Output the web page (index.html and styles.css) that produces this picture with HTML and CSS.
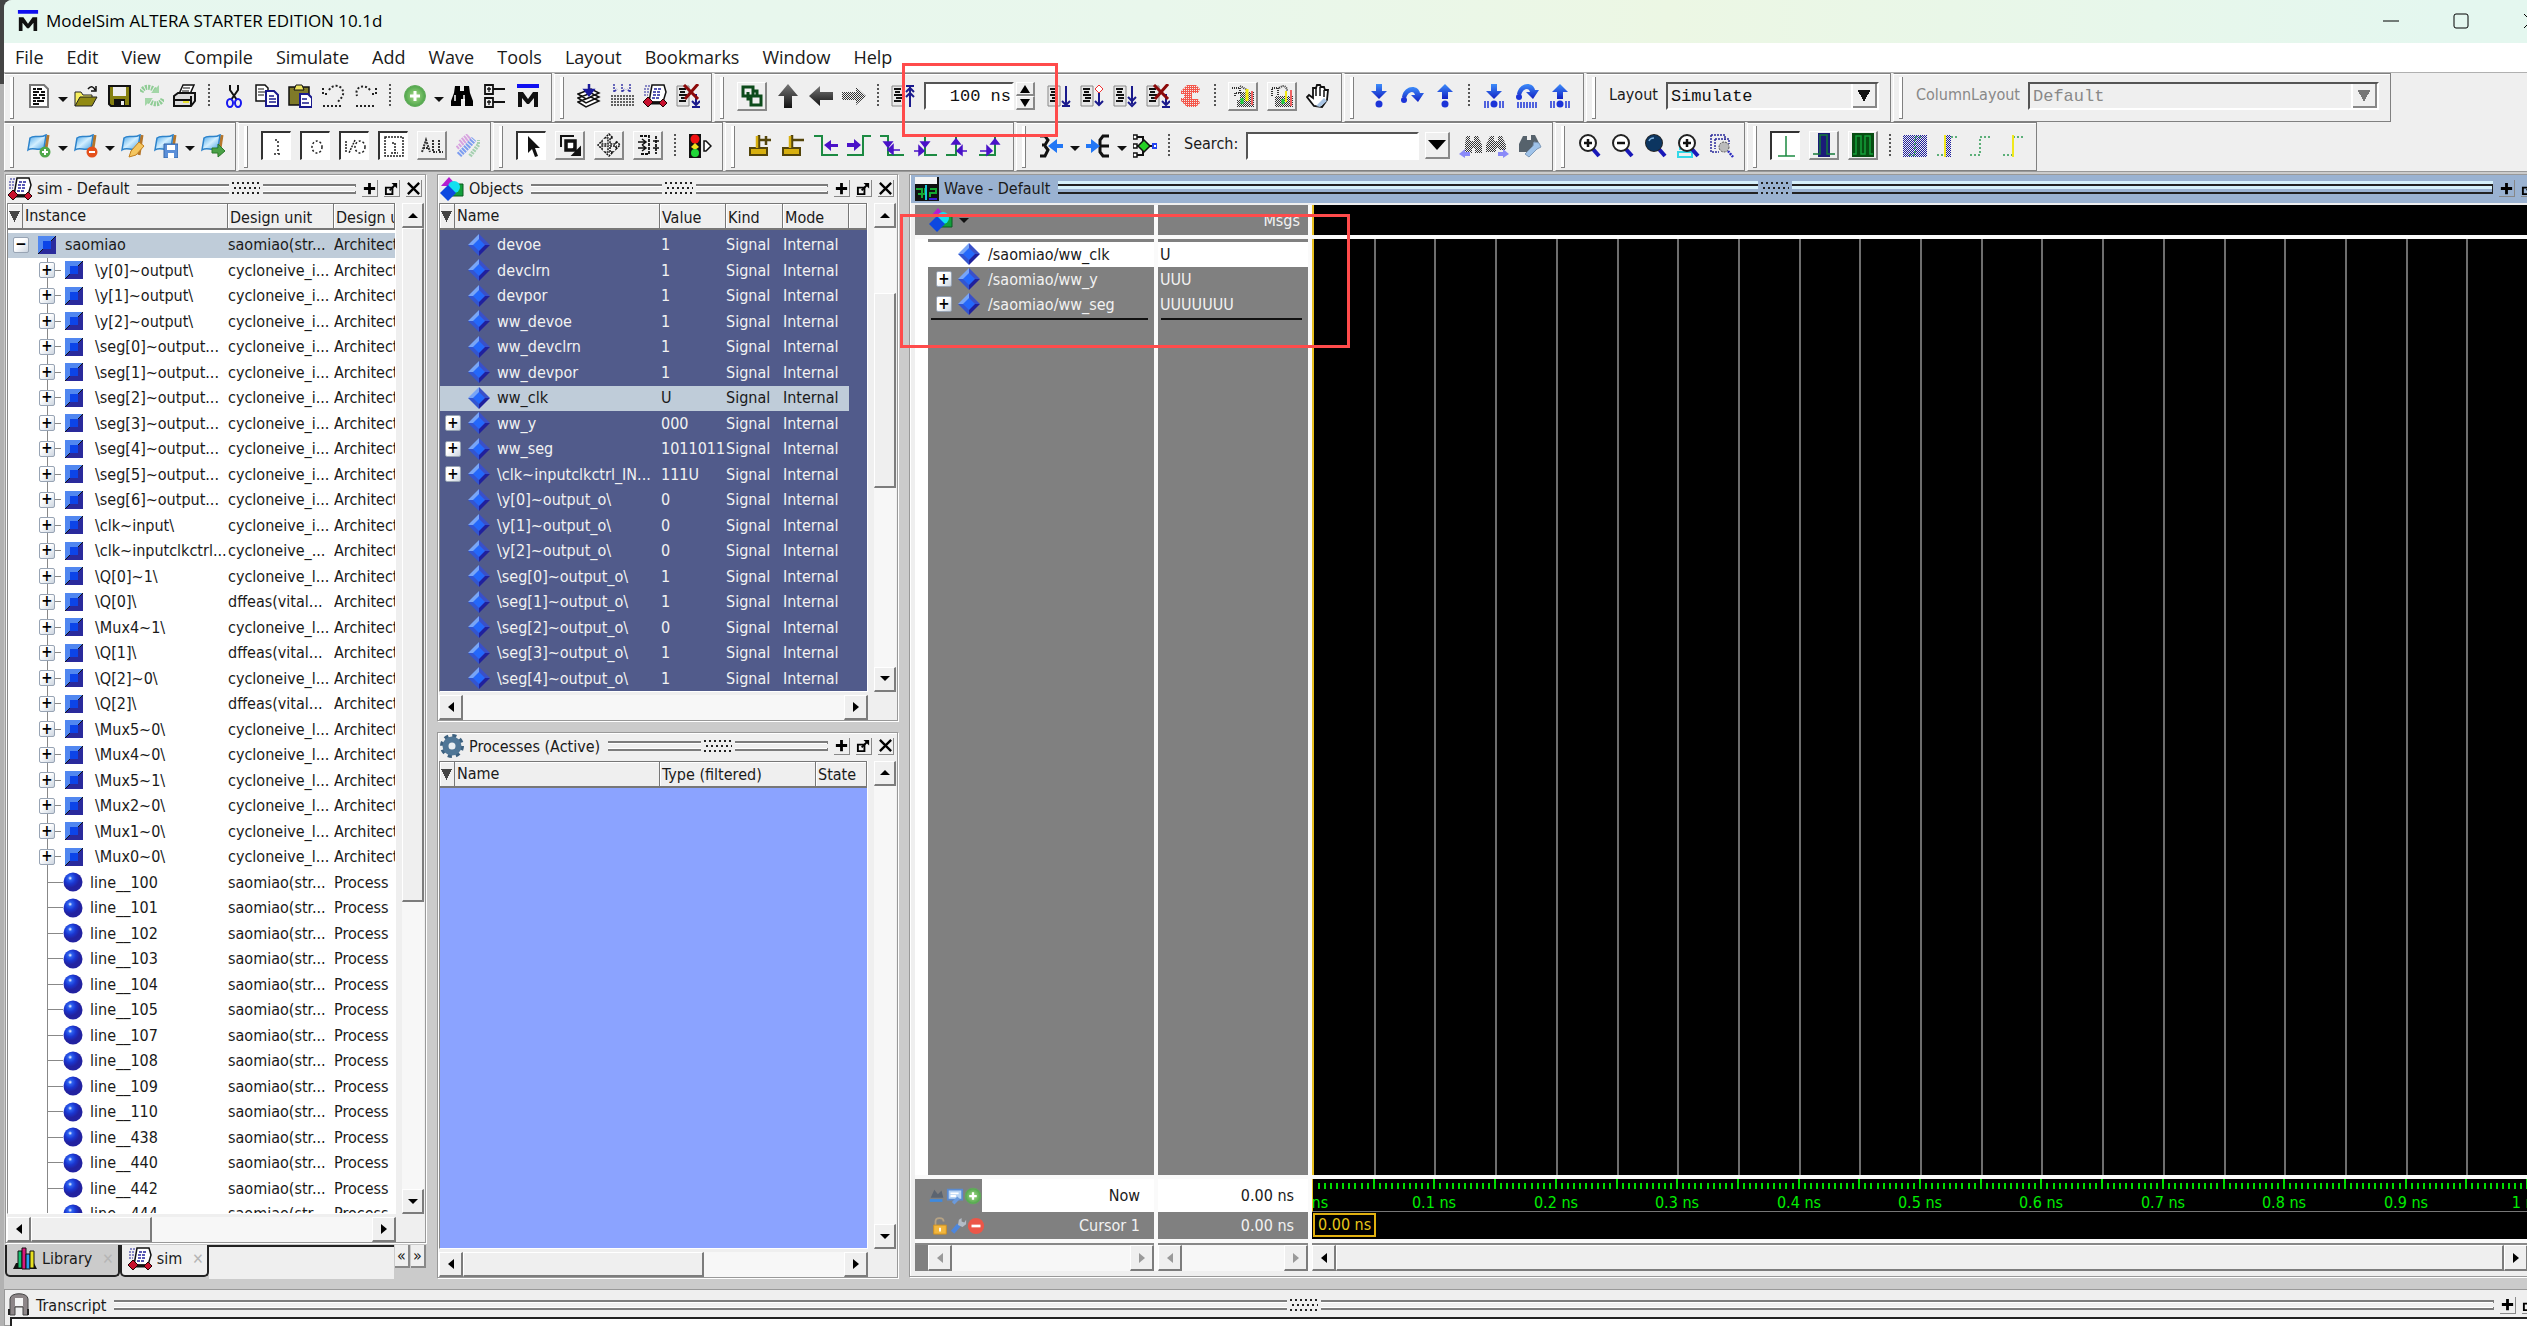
FILE: index.html
```html
<!DOCTYPE html>
<html lang="en">
<head>
  <meta charset="UTF-8" />
  <meta name="viewport" content="width=device-width, initial-scale=1" />
  <title>ModelSim ALTERA STARTER EDITION 10.1d</title>
  <link rel="stylesheet" href="styles.css">
</head>
<body>

<svg class="sprite" aria-hidden="true">
  <defs>
    <pattern id="dither" width="2" height="2" patternUnits="userSpaceOnUse"><path d="M0 0h1v1H0zM1 1h1v1H1z" fill="#333"/></pattern>
    <pattern id="ditherRed" width="2" height="2" patternUnits="userSpaceOnUse"><path d="M0 0h1v2H0zM1 1h1v1H1z" fill="#f4574b"/></pattern>
    <pattern id="ditherBlue" width="2" height="2" patternUnits="userSpaceOnUse"><path d="M0 0h1v1H0zM1 1h1v1H1z" fill="#1c1c9c"/></pattern>
    <linearGradient id="gDark" x2="0" y2="1"><stop stop-color="#777"/><stop offset="1" stop-color="#111"/></linearGradient>
    <linearGradient id="gBlue" x2="0" y2="1"><stop stop-color="#3d8dfa"/><stop offset="1" stop-color="#1221c4"/></linearGradient>
    <linearGradient id="gFlag" x2="1" y2="1"><stop stop-color="#3f9fe6"/><stop offset=".5" stop-color="#d3efff"/><stop offset="1" stop-color="#3d9be4"/></linearGradient>
    <radialGradient id="gBall" cx=".35" cy=".3"><stop stop-color="#fff"/><stop offset=".22" stop-color="#2d62f0"/><stop offset=".6" stop-color="#1a35cf"/><stop offset="1" stop-color="#2222a0"/></radialGradient>
    <radialGradient id="gGreen"><stop stop-color="#a9dc8a"/><stop offset="1" stop-color="#4ea54a"/></radialGradient>
  </defs>

  <!-- shared pieces -->
  <symbol id="p-doc" viewBox="0 0 24 24"><path d="M3 1h14l4 4v18H3z" fill="#fff" stroke="#777" stroke-width="2"/><path d="M6 5h3M10 5h5M6 8h6M14 8h4M6 11h4M12 11h6M6 14h7M15 14h3M6 17h3M10 17h7M6 20h6" stroke="#111" stroke-width="2"/></symbol>
  <symbol id="p-page" viewBox="0 0 24 24"><path d="M1 2h12v20H1z" fill="#e8e8e8" stroke="#888"/><path d="M3 5h7M4 8h5M3 11h8M5 14h6M3 17h7" stroke="#111" stroke-width="2"/></symbol>
  <symbol id="p-flag" viewBox="0 0 24 24"><path d="M21 1l-3 20" stroke="#b5762b" stroke-width="3"/><path d="M3 4c5-4 9 1 16-3l-2 13c-7 4-10-2-16 2z" fill="url(#gFlag)" stroke="#2d83cb" stroke-width="1.500"/></symbol>
  <symbol id="p-bino" viewBox="0 0 24 24"><path d="M5 2h5v5h4V2h5l1 7 3 8v5h-8v-7h-4v7H1v-5l3-8z"/></symbol>
  <symbol id="p-lens" viewBox="0 0 24 24"><path d="M14 14l7 8" stroke="#1818b8" stroke-width="4"/><circle cx="10" cy="9" r="8" fill="#fff" stroke="#222" stroke-width="2"/></symbol>

  <!-- file / edit -->
  <symbol id="i-m" viewBox="0 0 24 24"><path d="M1 0h22v4H1z" fill="#1010f0"/><path d="M2 23V8h5l5 7 5-7h5v15h-4V14l-5 6h-2l-5-6v9z" fill="#111"/></symbol>
  <symbol id="i-new" viewBox="0 0 24 24"><use href="#p-doc"/></symbol>
  <symbol id="i-open" viewBox="0 0 24 24"><path d="M14 5c3-4 6-2 7 1m1-4v5h-5" fill="none" stroke="#111" stroke-width="1.500"/><path d="M1 22V8h6l2 3h9v3" fill="#f8f060" stroke="#222"/><path d="M1 22l5-9h17l-5 9z" fill="#918a13" stroke="#222"/></symbol>
  <symbol id="i-save" viewBox="0 0 24 24"><path d="M2 2h21v20H4l-2-2z" fill="#858010" stroke="#111" stroke-width="2"/><path d="M6 3h13v9H6z" fill="#eee"/><path d="M7 15h11v7H7z" fill="#111"/><path d="M14 17h3v4h-3z" fill="#eee"/></symbol>
  <symbol id="i-refresh" viewBox="0 0 24 24"><g fill="none" stroke="#8fcc95" stroke-width="5" stroke-dasharray="2 1"><path d="M1 8c3-6 9-6 14-2"/><path d="M23 15c-3 6-9 6-14 2"/></g><path d="M11 9h8V1zM13 14H5v8z" fill="#a3d6a7"/></symbol>
  <symbol id="i-print" viewBox="0 0 24 24"><path d="M6 10l4-9h11l-4 9z" fill="#fff" stroke="#111" stroke-width="1.500"/><path d="M10 4h7M9 7h7" stroke="#111"/><path d="M1 12l4-3h17v8l-4 5H1z" fill="#ddd" stroke="#111" stroke-width="2"/><path d="M2 16h15M18 12v9" stroke="#111" stroke-width="2"/><path d="M10 17h6v2h-6z" fill="#e8e030"/></symbol>
  <symbol id="i-cut" viewBox="0 0 24 24"><path d="M8 1v5l7 10M16 1v5L9 16" fill="none" stroke="#111" stroke-width="2"/><g fill="none" stroke="#1818f0" stroke-width="2"><ellipse cx="8" cy="19" rx="3" ry="4"/><ellipse cx="16" cy="19" rx="3" ry="4"/></g></symbol>
  <symbol id="i-copy" viewBox="0 0 24 24"><path d="M1 1h9l3 3v13H1z" fill="#fff" stroke="#111" stroke-width="1.500"/><path d="M3 5h6M3 8h8M3 11h6" stroke="#111"/><path d="M11 7h8l4 4v11H11z" fill="#fff" stroke="#1a1a8c" stroke-width="2"/><path d="M14 12h5M14 15h7M14 18h7" stroke="#1a1a8c" stroke-width="1.500"/></symbol>
  <symbol id="i-paste" viewBox="0 0 24 24"><path d="M1 3h20v18H1z" fill="#7f7a28" stroke="#111" stroke-width="1.500"/><path d="M6 6l2-5h6l2 5z" fill="#eee460" stroke="#111"/><path d="M12 10h8l4 4v9H12z" fill="#fff" stroke="#1a1a8c" stroke-width="2"/><path d="M14 15h5M14 19h7" stroke="#1a1a8c" stroke-width="1.500"/></symbol>
  <symbol id="i-undo" viewBox="0 0 24 24"><g fill="none" stroke="#222" stroke-width="2" stroke-dasharray="2 2"><path d="M2 4v6h6M8 6c6-9 18-2 13 7l-5 6M2 22h20"/></g></symbol>
  <symbol id="i-redo" viewBox="0 0 24 24"><g fill="none" stroke="#222" stroke-width="2" stroke-dasharray="2 2"><path d="M22 4v6h-6M16 6C10-1 0 3 3 12M2 22h20"/></g></symbol>
  <symbol id="i-add" viewBox="0 0 24 24"><circle cx="12" cy="12" r="10.500" fill="url(#gGreen)" stroke="#63ad5c"/><path d="M12 7v10M7 12h10" stroke="#fff" stroke-width="3"/></symbol>
  <symbol id="i-find" viewBox="0 0 24 24"><use href="#p-bino"/><path d="M5 11v6M14 11v6" stroke="#fff" stroke-width="1.500"/></symbol>
  <symbol id="i-tree" viewBox="0 0 24 24"><path d="M2 1h8v9H2zM2 14h8v9H2zM10 5h12M10 18h12" fill="none" stroke="#111" stroke-width="1.800"/><path d="M4 5h4M6 3v5M4 18h4M6 16v5" stroke="#111" stroke-width="1.300"/></symbol>

  <!-- compile / simulate -->
  <symbol id="i-compile" viewBox="0 0 24 24"><g fill="#fff" stroke="#111" stroke-width="1.500"><path d="M1 18l8 5 13-6-8-4zM1 14l8 5 13-6-8-4zM1 10l8 5 13-6-8-4z"/></g><path d="M12 0v10M8 6l4 5 4-5z" stroke="#1a1a9c" stroke-width="2.500" fill="#1a1a9c"/></symbol>
  <symbol id="i-compileall" viewBox="0 0 24 24"><path d="M4 0v8l3-3M12 0v8l3-3M20 0v8l-3-3" fill="none" stroke="#3a3aa8" stroke-width="1.500" stroke-dasharray="2 1"/><path d="M1 12h23M1 15h23M1 18h23M1 21h23" stroke="#333" stroke-width="1.500" stroke-dasharray="2 1"/></symbol>
  <symbol id="i-sim" viewBox="0 0 24 24"><path d="M2 2h5M1 5h5M1 8h5M1 11h4" stroke="#22229a" stroke-dasharray="2 1"/><path d="M9 1h12l2 7-3 10H6z" fill="#fff" stroke="#111" stroke-width="1.500"/><path d="M11 5h8M10 8h8M10 11h7M9 14h7" stroke="#22229a" stroke-width="1.300" stroke-dasharray="3 1"/><path d="M6 19h14" stroke="#111" stroke-width="3"/><path d="M5 13l5 5-5 5-5-5zM20 15l4 4-4 4-4-4z" fill="#c8102e" stroke="#200"/></symbol>
  <symbol id="i-break" viewBox="0 0 24 24"><use href="#p-page"/><path d="M20 10v11M16 17l4 4 4-4M16 23h8" fill="none" stroke="#1a1a8c" stroke-width="2"/><path d="M8 1l14 14M22 0L9 15" stroke="#8c0a0a" stroke-width="3"/></symbol>

  <!-- run -->
  <symbol id="i-link" viewBox="0 0 24 24"><path d="M3 3h10v9H3zM11 12h10v9H11z" fill="none" stroke="#0c4b1b" stroke-width="3"/><path d="M8 8v7h4M17 11V7h-3" fill="none" stroke="#0c4b1b" stroke-width="3"/></symbol>
  <symbol id="i-up" viewBox="0 0 24 24"><path d="M12 0l10 12h-6v12H8V12H2z" fill="url(#gDark)"/></symbol>
  <symbol id="i-back" viewBox="0 0 24 24"><path d="M0 12L11 2v6h13v8H11v6z" fill="url(#gDark)"/></symbol>
  <symbol id="i-fwd" viewBox="0 0 24 24"><path d="M24 12L14 3v5H0v8h14v5z" fill="url(#dither)"/></symbol>
  <symbol id="i-restart" viewBox="0 0 24 24"><use href="#p-page"/><path d="M19 23V3M15 2h8M15 8l4-4 4 4M15 13l4-4 4 4" fill="none" stroke="#1a1a8c" stroke-width="2"/></symbol>
  <symbol id="i-run" viewBox="0 0 24 24"><use href="#p-page"/><path d="M19 2v18M15 17l4 4 4-4M15 22h8" fill="none" stroke="#1a1a8c" stroke-width="2"/></symbol>
  <symbol id="i-continue" viewBox="0 0 24 24"><use href="#p-page"/><path d="M19 8v13M15 17l4 4 4-4" fill="none" stroke="#1a1a8c" stroke-width="2"/><path d="M19 1l4 4-4 4-4-4z" fill="#fff" stroke="#e33"/></symbol>
  <symbol id="i-runall" viewBox="0 0 24 24"><use href="#p-page"/><path d="M19 2v18M15 13l4 4 4-4M15 18l4 4 4-4" fill="none" stroke="#1a1a8c" stroke-width="2"/></symbol>
  <symbol id="i-stop" viewBox="0 0 24 24"><path d="M8 1h9l4 4-2 4h-6v6h6l2 4-4 4H8l-6-6v-3h3v-4H2V7z" fill="url(#ditherRed)"/></symbol>
  <symbol id="i-perf" viewBox="0 0 24 24"><path d="M1 4h8v5H4v3M9 2l7 4" fill="none" stroke="#333" stroke-width="2" stroke-dasharray="1 1"/><path d="M9 8h14v15H6v-7h3z" fill="url(#dither)"/><path d="M16 5v12" stroke="#f0ea10" stroke-width="3"/><path d="M21 7v14" stroke="#f06464" stroke-width="2"/><path d="M11 14v6" stroke="#20d040" stroke-width="3"/></symbol>
  <symbol id="i-mem" viewBox="0 0 24 24"><path d="M2 12V4h6v8M9 4c5-4 8-1 8 3" fill="none" stroke="#333" stroke-width="2" stroke-dasharray="1 1"/><path d="M5 12h18v11H5z" fill="url(#dither)"/><path d="M16 7v11" stroke="#f0ea10" stroke-width="2"/><path d="M21 6v16" stroke="#f06464" stroke-width="2"/><path d="M13 15v5" stroke="#20d040" stroke-width="3"/></symbol>
  <symbol id="i-hand" viewBox="0 0 24 24"><path d="M8 22L1 13l2-2 4 3V4h3l1-3h3l1 2h3l1 3h3l-1 10-5 7z" fill="#fff" stroke="#111" stroke-width="1.800"/><path d="M10 4v8M14 3v9M18 6v7" stroke="#111" stroke-width="1.500"/><path d="M10 22l8-8 3 3-7 6z" fill="#a8c4e4"/></symbol>

  <!-- step -->
  <symbol id="i-stepin" viewBox="0 0 24 24"><path d="M9 0h6v7h5l-8 8-8-8h5z" fill="url(#gBlue)"/><circle cx="12" cy="20" r="3.500" fill="#1c34d8"/></symbol>
  <symbol id="i-stepover" viewBox="0 0 24 24"><path d="M2 13C4 1 18 0 20 9h4l-6 9-7-7h4c-1-5-7-4-9 3z" fill="url(#gBlue)"/><circle cx="4" cy="16" r="3" fill="#1c34d8"/></symbol>
  <symbol id="i-stepout" viewBox="0 0 24 24"><path d="M9 15h6V8h5l-8-8-8 8h5z" fill="url(#gBlue)"/><circle cx="12" cy="20" r="3.500" fill="#1c34d8"/></symbol>
  <symbol id="i-stepinc" viewBox="0 0 24 24"><use href="#i-stepin"/><path d="M3 17v7M6 17v7M18 17v7M21 17v7" stroke="#1c34d8" stroke-width="1.500"/></symbol>
  <symbol id="i-stepoverc" viewBox="0 0 24 24"><use href="#i-stepover" y="-3"/><path d="M3 18v6M6 18v6M9 18v6M12 18v6M15 18v6M18 18v6M21 18v6" stroke="#1c34d8" stroke-width="1.500"/></symbol>
  <symbol id="i-stepoutc" viewBox="0 0 24 24"><use href="#i-stepout"/><path d="M3 17v7M6 17v7M18 17v7M21 17v7" stroke="#1c34d8" stroke-width="1.500"/></symbol>

  <!-- bookmarks -->
  <symbol id="i-flagadd" viewBox="0 0 24 24"><use href="#p-flag"/><circle cx="18" cy="18" r="5.500" fill="#4fa84b"/><path d="M18 15v6M15 18h6" stroke="#fff" stroke-width="2"/></symbol>
  <symbol id="i-flagdel" viewBox="0 0 24 24"><use href="#p-flag"/><circle cx="18" cy="18" r="5.500" fill="#e4501c"/><path d="M15 18h6" stroke="#fff" stroke-width="2"/></symbol>
  <symbol id="i-flagedit" viewBox="0 0 24 24"><use href="#p-flag"/><path d="M8 23l2-6 8-9 5 4-8 9z" fill="#f4c660" stroke="#c17e1d"/></symbol>
  <symbol id="i-flagsave" viewBox="0 0 24 24"><use href="#p-flag"/><path d="M10 10h14v14H10z" fill="#5b8fd8" stroke="#3566a8"/><path d="M13 11h8v5h-8zM14 19h6v5h-6z" fill="#fff"/></symbol>
  <symbol id="i-flaggo" viewBox="0 0 24 24"><use href="#p-flag"/><path d="M11 14h6v-4l7 7-7 6v-4h-6z" fill="#4aa146" stroke="#2b7a2a"/></symbol>

  <!-- filters -->
  <symbol id="i-fin" viewBox="0 0 24 24"><path d="M10 6h3v14M9 20h7" fill="none" stroke="#222" stroke-width="1.500" stroke-dasharray="2 2"/></symbol>
  <symbol id="i-fout" viewBox="0 0 24 24"><ellipse cx="13" cy="13" rx="5" ry="6" fill="none" stroke="#222" stroke-width="1.500" stroke-dasharray="2 2"/></symbol>
  <symbol id="i-fio" viewBox="0 0 24 24"><path d="M3 7v12M12 6L6 19" stroke="#222" stroke-width="1.500" stroke-dasharray="2 1"/><ellipse cx="17" cy="13" rx="5" ry="6" fill="none" stroke="#222" stroke-width="1.500" stroke-dasharray="2 2"/></symbol>
  <symbol id="i-fint" viewBox="0 0 24 24"><path d="M3 3h18v19H3zM10 9h3v10M9 19h7" fill="none" stroke="#222" stroke-width="1.500" stroke-dasharray="2 1"/></symbol>
  <symbol id="i-fall" viewBox="0 0 24 24"><path d="M2 19l4-12 4 12M3 15h6M13 7v12h4M19 7v12h4" fill="none" stroke="#333" stroke-width="2" stroke-dasharray="2 1"/></symbol>
  <symbol id="i-fcfg" viewBox="0 0 24 24"><path d="M1 14L14 3M4 8l8-7" stroke="#d7a3e0" stroke-width="4" stroke-dasharray="2 1"/><path d="M14 22l9-12V6" fill="none" stroke="#a5d0b0" stroke-width="4" stroke-dasharray="2 1"/><path d="M3 21l9-9 6-7" fill="none" stroke="#7d9df0" stroke-width="6" stroke-dasharray="2 1"/></symbol>

  <!-- mouse modes -->
  <symbol id="i-arrow" viewBox="0 0 24 24"><path d="M8 2v17l4-4 3 8 3-1-3-8h5z" fill="#111"/></symbol>
  <symbol id="i-zoommode" viewBox="0 0 24 24"><path d="M3 14V3h13" fill="none" stroke="#111" stroke-width="2"/><path d="M8 8h9v9H8z" fill="#fff" stroke="#111" stroke-width="3.500"/><path d="M15 15l6 6M22 15v7h-7z" stroke="#111" stroke-width="2" fill="#111"/></symbol>
  <symbol id="i-pan" viewBox="0 0 24 24"><path d="M12 1l4 4h-3v6h6V8l4 4-4 4v-3h-6v6h3l-4 4-4-4h3v-6H5v3l-4-4 4-4v3h6V5H8z" fill="#fff" stroke="#111" stroke-width="1.500" stroke-dasharray="2 1"/></symbol>
  <symbol id="i-editmode" viewBox="0 0 24 24"><path d="M4 3h9v18H4M20 3v18" fill="none" stroke="#111" stroke-width="1.800" stroke-dasharray="3 1"/><path d="M2 9h8M2 15h8M6 6l4 3-4 3M6 12l4 3-4 3M17 8h6M17 15h6" fill="none" stroke="#111" stroke-width="1.500"/></symbol>
  <symbol id="i-traffic" viewBox="0 0 24 24"><path d="M1 0h12v24H1z" fill="#111"/><circle cx="7" cy="5" r="4.500" fill="#f01010"/><path d="M7 9l4 4-4 3-4-3z" fill="#f0e020"/><circle cx="7" cy="19" r="4" fill="#20d838"/><path d="M16 7h2l5 5-5 5h-2z" fill="#fff" stroke="#111" stroke-width="1.500"/></symbol>

  <!-- cursors and edges -->
  <symbol id="i-curadd" viewBox="0 0 24 24"><path d="M11 1v13M11 6h12M18 2v9" fill="none" stroke="#54450a" stroke-width="2.500"/><path d="M2 14h17v7H2z" fill="#d8b010" stroke="#54450a" stroke-width="2"/><path d="M9 2v12" stroke="#d8b010" stroke-width="2.500"/></symbol>
  <symbol id="i-curdel" viewBox="0 0 24 24"><path d="M11 1v13M11 6h12" fill="none" stroke="#54450a" stroke-width="2.500"/><path d="M2 14h17v7H2z" fill="#d8b010" stroke="#54450a" stroke-width="2"/><path d="M9 2v12" stroke="#d8b010" stroke-width="2.500"/></symbol>
  <symbol id="i-prevtr" viewBox="0 0 24 24"><path d="M0 2h8v19h16" fill="none" stroke="#1c8a42" stroke-width="2"/><path d="M24 10h-7V6l-7 5 7 6v-4h7z" fill="#4a12c8"/></symbol>
  <symbol id="i-nexttr" viewBox="0 0 24 24"><path d="M24 2h-8v19H0" fill="none" stroke="#1c8a42" stroke-width="2"/><path d="M0 9h7V5l7 6-7 6v-4H0z" fill="#4a12c8"/></symbol>
  <symbol id="i-prevfall" viewBox="0 0 24 24"><path d="M0 2h8v19h16" fill="none" stroke="#1c8a42" stroke-width="2"/><path d="M4 8h8l-4 5zM20 16h-9M13 11v9l-5-4z" stroke="#4a12c8" fill="#4a12c8" stroke-width="1.500"/></symbol>
  <symbol id="i-nextfall" viewBox="0 0 24 24"><path d="M0 2h12v19h12" fill="none" stroke="#1c8a42" stroke-width="2"/><path d="M8 8h8l-4 5zM1 17h8M6 12v9l5-4z" stroke="#4a12c8" fill="#4a12c8" stroke-width="1.500"/></symbol>
  <symbol id="i-prevrise" viewBox="0 0 24 24"><path d="M24 2H10v19H0" fill="none" stroke="#1c8a42" stroke-width="2"/><path d="M6 10h8l-4-5zM21 17h-8M16 12v9l-5-4z" stroke="#4a12c8" fill="#4a12c8" stroke-width="1.500"/></symbol>
  <symbol id="i-nextrise" viewBox="0 0 24 24"><path d="M24 2h-8v19H0" fill="none" stroke="#1c8a42" stroke-width="2"/><path d="M12 10h8l-4-5zM1 17h8M8 12v9l5-4z" stroke="#4a12c8" fill="#4a12c8" stroke-width="1.500"/></symbol>
  <symbol id="i-drivers" viewBox="0 0 24 24"><path d="M1 2h5l3 4-3 5H3m3 1l3 4-3 6H1" fill="none" stroke="#111" stroke-width="3"/><path d="M24 10h-6V5l-9 7 9 7v-5h6z" fill="#2277f5"/></symbol>
  <symbol id="i-readers" viewBox="0 0 24 24"><path d="M23 2h-6l-3 4v12l3 4h6M14 12h9" fill="none" stroke="#111" stroke-width="3"/><path d="M0 10h5V5l9 7-9 7v-5H0z" fill="#2277f5"/></symbol>
  <symbol id="i-expand" viewBox="0 0 24 24"><path d="M3 3h7v18H3M1 12h20" fill="none" stroke="#111" stroke-width="2"/><path d="M0 1h4v4H0zM0 10h4v4H0zM0 19h4v4H0z" fill="#fff" stroke="#111" stroke-width="1.500"/><path d="M11 6l6 6-6 6-6-6z" fill="#25d025" stroke="#111" stroke-width="1.500"/><path d="M20 10h4v4h-4z" fill="#fff" stroke="#2244f0" stroke-width="2"/></symbol>
  <symbol id="i-findprev" viewBox="0 0 24 24"><path d="M7 2h4v5h4V2h4l4 9v8h-7v-5h-3v5H6v-8z" fill="url(#dither)"/><path d="M0 20l6-5v3h5v4H6v2z" fill="#8a8af8"/></symbol>
  <symbol id="i-findnext" viewBox="0 0 24 24"><path d="M5 2h4v5h4V2h4l4 9v5h-7v-2h-3v4H1v-7z" fill="url(#dither)"/><path d="M24 20l-6-5v3h-5v4h5v2z" fill="#8a8af8"/></symbol>
  <symbol id="i-findcfg" viewBox="0 0 24 24"><path d="M5 2h4v4h4V1h4l4 8-6 9H1v-8z" fill="#56626c"/><path d="M7 20l8-8 1-4 5 1 2 4-4 2-8 8z" fill="#9fc3ea" stroke="#7d99b8"/></symbol>

  <!-- zoom -->
  <symbol id="i-zin" viewBox="0 0 24 24"><use href="#p-lens"/><path d="M6 9h8M10 5v8" stroke="#111" stroke-width="2.500"/></symbol>
  <symbol id="i-zout" viewBox="0 0 24 24"><use href="#p-lens"/><path d="M6 9h8" stroke="#111" stroke-width="2.500"/></symbol>
  <symbol id="i-zfull" viewBox="0 0 24 24"><use href="#p-lens"/><circle cx="10" cy="9" r="8" fill="#0c3560"/><path d="M5 7c1-3 3-3 5-3" stroke="#7fb2e0" stroke-width="1.500" fill="none"/></symbol>
  <symbol id="i-zcur" viewBox="0 0 24 24"><path d="M1 18h14v5H1zM3 4v12" fill="none" stroke="#32d8e8" stroke-width="2"/><use href="#i-zin"/></symbol>
  <symbol id="i-zsel" viewBox="0 0 24 24"><path d="M1 1h14v5M1 1v17h8M5 5h14v5M5 5v10" fill="none" stroke="#2a2a9a" stroke-width="1.500" stroke-dasharray="2 1"/><path d="M18 17l5 6" stroke="#2a2ac0" stroke-width="2.500" stroke-dasharray="2 1"/><circle cx="14" cy="13" r="5" fill="#bbb" stroke="#555" stroke-dasharray="2 1"/></symbol>

  <!-- analog -->
  <symbol id="i-w1" viewBox="0 0 24 24"><path d="M12 2v20M4 22h17" stroke="#1c8a42" stroke-width="1.500"/></symbol>
  <symbol id="i-w2" viewBox="0 0 24 24"><path d="M6 0h12v24H6z" fill="#1b1b78"/><path d="M1 21h7V2h7v19h8" fill="none" stroke="#157a3a" stroke-width="1.500"/></symbol>
  <symbol id="i-w3" viewBox="0 0 24 24"><path d="M1 0h22v24H1z" fill="#074d12"/><path d="M2 21h3V3h5v18h4V3h5v18h3" fill="none" stroke="#15a03a" stroke-width="1.500"/></symbol>
  <symbol id="i-w4" viewBox="0 0 24 24"><path d="M0 1h24v22H0z" fill="url(#ditherBlue)"/><path d="M6 21h6V3h7" fill="none" stroke="#2c9a52" stroke-width="1.500" stroke-dasharray="2 2"/></symbol>
  <symbol id="i-w5" viewBox="0 0 24 24"><path d="M9 1h6v22H9z" fill="url(#ditherBlue)"/><path d="M1 21h7M15 3h8" stroke="#2c9a52" stroke-width="1.500" stroke-dasharray="2 2"/><path d="M9 1v22" stroke="#f0e81c" stroke-width="2"/></symbol>
  <symbol id="i-w6" viewBox="0 0 24 24"><path d="M1 21h10V3h11" fill="none" stroke="#2c9a52" stroke-width="1.500" stroke-dasharray="2 2"/></symbol>
  <symbol id="i-w7" viewBox="0 0 24 24"><path d="M1 21h10V3h11" fill="none" stroke="#2c9a52" stroke-width="1.500" stroke-dasharray="2 2"/><path d="M11 1v22" stroke="#f0e81c" stroke-width="2"/></symbol>

  <!-- panes -->
  <symbol id="i-shapes" viewBox="0 0 24 24"><path d="M1 9l8-9 8 9z" fill="#b41ed0"/><path d="M12 7h11v12H12z" fill="#12a03c" stroke="#0a5a20"/><circle cx="14" cy="10" r="6" fill="#12e0f0"/><path d="M8 8l8 8-8 8-8-8z" fill="#0d48e0"/></symbol>
  <symbol id="i-gear" viewBox="0 0 24 24"><circle cx="12" cy="12" r="10" fill="none" stroke="#3d617f" stroke-width="4" stroke-dasharray="4 3.850"/><circle cx="12" cy="12" r="6.500" fill="none" stroke="#4f7696" stroke-width="6"/><circle cx="12" cy="12" r="3" fill="#e8eef2"/></symbol>
  <symbol id="i-wave" viewBox="0 0 24 24"><path d="M0 0h24v24H0z" fill="#111"/><path d="M0 0h22v7H0z" fill="#f4f4f4"/><path d="M1 12h6v9M3 17h7V11M15 12h6v4h-6v4" fill="none" stroke="#15a832" stroke-width="2"/><path d="M11 8v15" stroke="#18c8d8" stroke-width="2"/><path d="M14 22h8" stroke="#3a20d8" stroke-width="2"/></symbol>
  <symbol id="i-script" viewBox="0 0 24 24"><path d="M3 22V6c0-7 18-7 18 0v16h-5v-8H8v8z" fill="#8d8688" stroke="#444"/><path d="M8 5h8v8H8z" fill="#f5f5f5"/><path d="M2 16v6M21 16v6" stroke="#222" stroke-width="2"/></symbol>
  <symbol id="i-lib" viewBox="0 0 24 24"><path d="M0 22l3-6h18l3 6z" fill="#111"/><g stroke="#111"><path d="M5 4h4v17H5z" fill="#18c070"/><path d="M9 1h4v21H9z" fill="#d8187c"/><path d="M13 7h4v15h-4z" fill="#2c9cf0"/><path d="M17 4h4v17h-4z" fill="#e8e020"/></g></symbol>
  <symbol id="i-plus" viewBox="0 0 16 16"><path d="M8 2v12M2 8h12" stroke="#000" stroke-width="3"/></symbol>
  <symbol id="i-undock" viewBox="0 0 16 16"><path d="M2 7h7v7H2z" fill="none" stroke="#000" stroke-width="2"/><path d="M6 10l6-6" stroke="#000" stroke-width="2"/><path d="M8 2h6v6z"/></symbol>
  <symbol id="i-close" viewBox="0 0 16 16"><path d="M2 2l12 12M14 2L2 14" stroke="#000" stroke-width="2.500"/></symbol>
  <symbol id="i-block" viewBox="0 0 18 18"><path d="M0 0h18L0 18z" fill="#5187f0"/><path d="M18 0v18H0z" fill="#2a2a9c"/><path d="M0 18L18 0" stroke="#111"/><path d="M5 5h8v8H5z" fill="#0c44e8"/></symbol>
  <symbol id="i-ball" viewBox="0 0 20 20"><circle cx="10" cy="10" r="9.500" fill="url(#gBall)"/></symbol>
  <symbol id="i-diamond" viewBox="0 0 22 22"><path d="M11 0L0 11h11z" fill="#78a5f7"/><path d="M11 0l11 11H11z" fill="#3a50c8"/><path d="M0 11l11 11V11z" fill="#3355d0"/><path d="M22 11L11 22V11z" fill="#20209c"/><path d="M11 5l6 6-6 6-6-6z" fill="#2468fb"/></symbol>
  <symbol id="i-nowdrv" viewBox="0 0 20 20"><path d="M3 12l4-9 4 5 4-4 2 8z" fill="#5b6470"/><path d="M2 15h14" stroke="#3d8ae0" stroke-width="3"/></symbol>
  <symbol id="i-nowcfg" viewBox="0 0 20 20"><path d="M2 3h16v11H2z" fill="#b8d4f4" stroke="#5a8ad0" stroke-width="2"/><path d="M5 7h9M5 10h6" stroke="#fff" stroke-width="2"/><path d="M8 18l6-6" stroke="#6a9adc" stroke-width="4"/></symbol>
  <symbol id="i-lock" viewBox="0 0 20 20"><path d="M5 9V5c0-5 9-5 9 0" fill="none" stroke="#b5a284" stroke-width="2"/><path d="M3 9h14v10H3z" fill="#f2b63c" stroke="#d09020"/><path d="M9 12h2v4H9z" fill="#fff"/></symbol>
  <symbol id="i-wrench" viewBox="0 0 20 20"><path d="M4 17l7-8" stroke="#4d86dc" stroke-width="5"/><path d="M10 9l1-6 3-2v4l3 1 2-3v5l-4 3z" fill="#b4bcc6"/></symbol>
  <symbol id="i-minus" viewBox="0 0 20 20"><circle cx="10" cy="10" r="9" fill="#ec5648"/><path d="M5 10h10" stroke="#fff" stroke-width="3"/></symbol>
</svg>

<div class="app">
  <header class="titlebar">
    <svg class="logo"><use href="#i-m"/></svg>
    <h1>ModelSim ALTERA STARTER EDITION 10.1d</h1>
    <div class="window-buttons">
      <button aria-label="Minimize"><svg viewBox="0 0 16 16"><path d="M0 8h16"/></svg></button>
      <button aria-label="Maximize"><svg viewBox="0 0 16 16"><rect x="1" y="1" width="14" height="14" rx="2"/></svg></button>
      <button aria-label="Close"><svg viewBox="0 0 16 16"><path d="M1 1l14 14M15 1L1 15"/></svg></button>
    </div>
  </header>

  <nav class="menubar">
    <button>File</button><button>Edit</button><button>View</button><button>Compile</button><button>Simulate</button><button>Add</button><button>Wave</button><button>Tools</button><button>Layout</button><button>Bookmarks</button><button>Window</button><button>Help</button>
  </nav>

  <!-- data-icons is expanded to buttons by app.js -->
  <div class="toolbars">
    <div class="toolbar-row">
      <div class="toolbar" data-icons="new caret open save refresh print | cut copy paste undo redo | add caret find tree m"></div>
      <div class="toolbar" data-icons="compile compileall sim break"></div>
      <div class="toolbar">
        <span class="icons" data-icons="+link up back fwd | restart"></span>
        <div class="runtime">
          <input type="text" value="100 ns" aria-label="Run length">
          <span class="spin"><button class="more" aria-label="Increase"></button><button class="less" aria-label="Decrease"></button></span>
        </div>
        <span class="icons" data-icons="run continue runall break stop | +perf +mem hand"></span>
      </div>
      <div class="toolbar" data-icons="stepin stepover stepout | stepinc stepoverc stepoutc"></div>
      <div class="toolbar">
        <label class="combo"><span>Layout</span><select class="layout-select"><option>Simulate</option></select></label>
      </div>
      <div class="toolbar">
        <label class="combo disabled"><span>ColumnLayout</span><select class="column-select" disabled><option>Default</option></select></label>
      </div>
    </div>
    <div class="toolbar-row">
      <div class="toolbar" data-icons="flagadd caret flagdel caret flagedit flagsave caret flaggo"></div>
      <div class="toolbar" data-icons="*fin *fout *fio *fint +fall fcfg"></div>
      <div class="toolbar" data-icons="*arrow +zoommode +pan +editmode | traffic"></div>
      <div class="toolbar" data-icons="curadd curdel prevtr nexttr prevfall nextfall prevrise nextrise"></div>
      <div class="toolbar">
        <span class="icons" data-icons="drivers caret readers caret expand |"></span>
        <div class="search">
          <label for="search">Search:</label>
          <input id="search" type="text">
          <button class="drop" aria-label="Search history"></button>
        </div>
        <span class="icons tight" data-icons="findprev findnext"></span>
        <span class="icons" data-icons="findcfg"></span>
      </div>
      <div class="toolbar" data-icons="zin zout zfull zcur zsel"></div>
      <div class="toolbar" data-icons="*w1 +w2 +w3 | w4 w5 w6 w7"></div>
    </div>
  </div>

  <main class="workspace">
    <div class="dock dock-left">
      <section class="pane">
        <div class="pane-title" data-icon="sim" data-title="sim - Default"></div>
        <div class="pane-body">
          <div class="table-wrap white">
            <table>
              <colgroup><col class="c-instance"><col class="c-unit"><col></colgroup>
              <thead><tr><th><i class="sort"></i>Instance</th><th>Design unit</th><th>Design unit type</th></tr></thead>
              <tbody id="sim-rows"></tbody>
            </table>
          </div>
          <div class="scroll vertical" style="--before:0;--thumb:70;--after:30"></div>
          <div class="scroll horizontal" style="--before:0;--thumb:35;--after:65"></div>
        </div>
      </section>
      <div class="tabs">
        <button class="tab"><svg><use href="#i-lib"/></svg>Library<b>✕</b></button>
        <button class="tab active"><svg><use href="#i-sim"/></svg>sim<b>✕</b></button>
        <span class="tab-fill"></span>
        <button class="tab-nav" aria-label="Previous tab">«</button>
        <button class="tab-nav" aria-label="Next tab">»</button>
      </div>
    </div>

    <div class="dock dock-center">
      <section class="pane">
        <div class="pane-title" data-icon="shapes" data-title="Objects"></div>
        <div class="pane-body">
          <div class="table-wrap navy">
            <table>
              <colgroup><col class="c-name"><col class="c-value"><col class="c-kind"><col class="c-mode"><col></colgroup>
              <thead><tr><th><i class="sort"></i>Name</th><th>Value</th><th>Kind</th><th>Mode</th><th></th></tr></thead>
              <tbody id="object-rows"></tbody>
            </table>
          </div>
          <div class="scroll vertical" style="--before:15;--thumb:44;--after:41"></div>
          <div class="scroll horizontal" style="--before:1;--thumb:0;--after:0"></div>
        </div>
      </section>
      <section class="pane">
        <div class="pane-title" data-icon="gear" data-title="Processes (Active)"></div>
        <div class="pane-body">
          <div class="table-wrap sky">
            <table>
              <colgroup><col class="c-name"><col class="c-type"><col></colgroup>
              <thead><tr><th><i class="sort"></i>Name</th><th>Type (filtered)</th><th>State</th></tr></thead>
            </table>
          </div>
          <div class="scroll vertical" style="--before:1;--thumb:0;--after:0"></div>
          <div class="scroll horizontal" style="--before:0;--thumb:63;--after:37"></div>
        </div>
      </section>
    </div>

    <section class="pane wave">
      <div class="pane-title selected" data-icon="wave" data-title="Wave - Default"></div>
      <div class="wave-grid">
        <div class="wave-head names-head"><svg><use href="#i-shapes"/></svg><i class="caret"></i></div>
        <div class="wave-head msgs">Msgs</div>
        <div class="wave-head plot-head"></div>

        <div class="names">
          <div class="signal active"><span class="no-toggle"></span><svg><use href="#i-diamond"/></svg>/saomiao/ww_clk</div>
          <div class="signal"><button class="toggle">+</button><svg><use href="#i-diamond"/></svg>/saomiao/ww_y</div>
          <div class="signal"><button class="toggle">+</button><svg><use href="#i-diamond"/></svg>/saomiao/ww_seg</div>
          <div class="end-line"></div>
        </div>
        <div class="values">
          <div class="signal active">U</div>
          <div class="signal">UUU</div>
          <div class="signal">UUUUUUU</div>
          <div class="end-line"></div>
        </div>
        <div class="plot"><svg id="plot"></svg></div>

        <div class="time-names">
          <div class="now"><span class="mini"><svg><use href="#i-nowdrv"/></svg><svg><use href="#i-nowcfg"/></svg><svg><use href="#i-add"/></svg></span><span>Now</span></div>
          <div class="cursor"><span class="mini"><svg><use href="#i-lock"/></svg><svg><use href="#i-wrench"/></svg><svg><use href="#i-minus"/></svg></span><span>Cursor 1</span></div>
        </div>
        <div class="time-values">
          <div class="now"><span>0.00 ns</span></div>
          <div class="cursor"><span>0.00 ns</span></div>
        </div>
        <div class="ruler"><svg id="ruler"></svg><div class="cursor-time"><span>0.00 ns</span></div></div>

        <div class="scroll-cell first"><div class="scroll horizontal off" style="--before:1;--thumb:0;--after:0"></div></div>
        <div class="scroll-cell"><div class="scroll horizontal off" style="--before:1;--thumb:0;--after:0"></div></div>
        <div class="scroll-cell last"><div class="scroll horizontal" style="--before:0;--thumb:1;--after:0"></div></div>
      </div>
    </section>
  </main>

  <section class="transcript">
    <div class="pane-title" data-icon="script" data-title="Transcript"></div>
    <div class="transcript-text"></div>
  </section>
</div>

<div class="mark mark-runtime"></div>
<div class="mark mark-signals"></div>

<script src="app.js"></script>
</body>
</html>
```

FILE: app.js
```js
const icon = name => `<svg><use href="#i-${name}"/></svg>`;

// toolbars: "|" separator, "caret" menu arrow, "+x" raised button, "*x" pressed button
document.querySelectorAll('[data-icons]').forEach(bar => {
  bar.innerHTML = bar.dataset.icons.split(' ').map(item => {
    if (item === '|') return '<i class="sep"></i>';
    if (item === 'caret') return '<button class="menu-arrow" aria-label="More"><i class="caret"></i></button>';
    const kind = { '+': 'raised', '*': 'pressed' }[item[0]] || '';
    const name = kind ? item.slice(1) : item;
    return `<button class="tool ${kind}" aria-label="${name}">${icon(name)}</button>`;
  }).join('');
});

document.querySelectorAll('.pane-title').forEach(bar => {
  bar.innerHTML = `${icon(bar.dataset.icon)}<h2>${bar.dataset.title}</h2>
    <span class="grip"><i class="lines"></i><i class="dots"></i><i class="lines"></i></span>
    <button aria-label="Zoom pane">${icon('plus')}</button>
    <button aria-label="Undock">${icon('undock')}</button>
    <button aria-label="Close pane">${icon('close')}</button>`;
});

document.querySelectorAll('.scroll').forEach(bar => {
  const [a, b] = bar.classList.contains('vertical') ? ['up', 'down'] : ['left', 'right'];
  bar.innerHTML = `<button class="${a}" aria-label="${a}"></button><i class="before"></i><i class="thumb"></i><i class="after"></i><button class="${b}" aria-label="${b}"></button>`;
  if (getComputedStyle(bar).getPropertyValue('--thumb').trim() === '0') bar.querySelector('.thumb').remove();
});

// design hierarchy
const ioCell = 'cycloneive_i...';
const logicCell = 'cycloneive_l...';
const flipFlop = 'dffeas(vital...';
const instances = [
  ...[0, 1, 2].map(i => [`\\y[${i}]~output\\`, ioCell]),
  ...[0, 1, 2, 3, 4, 5, 6].map(i => [`\\seg[${i}]~output...`, ioCell]),
  ['\\clk~input\\', ioCell],
  ['\\clk~inputclkctrl...', 'cycloneive_...'],
  ['\\Q[0]~1\\', logicCell],
  ['\\Q[0]\\', flipFlop],
  ['\\Mux4~1\\', logicCell],
  ['\\Q[1]\\', flipFlop],
  ['\\Q[2]~0\\', logicCell],
  ['\\Q[2]\\', flipFlop],
  ...['5~0', '4~0', '5~1', '2~0', '1~0', '0~0'].map(n => [`\\Mux${n}\\`, logicCell])
];
const lines = [100, 101, 102, 103, 104, 105, 107, 108, 109, 110, 438, 440, 442, 444];

document.getElementById('sim-rows').innerHTML =
  `<tr class="selected root"><td><div class="node"><button class="toggle">−</button>${icon('block')}saomiao</div></td><td>saomiao(str...</td><td>Architecture</td></tr>` +
  instances.map(([name, unit]) =>
    `<tr class="child"><td><div class="node"><button class="toggle">+</button><i class="stub"></i>${icon('block')}${name}</div></td><td>${unit}</td><td>Architecture</td></tr>`).join('') +
  lines.map(n =>
    `<tr class="child process"><td><div class="node"><i class="branch"></i>${icon('ball')}line__${n}</div></td><td>saomiao(str...</td><td>Process</td></tr>`).join('');

// signals of the selected instance
const objects = [
  ['devoe', '1'], ['devclrn', '1'], ['devpor', '1'],
  ['ww_devoe', '1'], ['ww_devclrn', '1'], ['ww_devpor', '1'],
  ['ww_clk', 'U'], ['ww_y', '000'], ['ww_seg', '1011011'],
  ['\\clk~inputclkctrl_IN...', '111U'],
  ['\\y[0]~output_o\\', '0'], ['\\y[1]~output_o\\', '0'], ['\\y[2]~output_o\\', '0'],
  ['\\seg[0]~output_o\\', '1'], ['\\seg[1]~output_o\\', '1'], ['\\seg[2]~output_o\\', '0'],
  ['\\seg[3]~output_o\\', '1'], ['\\seg[4]~output_o\\', '1']
];
document.getElementById('object-rows').innerHTML = objects.map(([name, value]) => {
  const bus = value.length > 1;
  return `<tr class="${name === 'ww_clk' ? 'selected' : ''}"><td><div class="node">${bus ? '<button class="toggle">+</button>' : '<span class="no-toggle"></span>'}${icon('diamond')}${name}</div></td><td>${value}</td><td>Signal</td><td>Internal</td><td></td></tr>`;
}).join('');

// wave grid and ruler, one grid line every 0.05 ns
const nsWidth = 1214 / 2;
let grid = '';
let ruler = '';
for (let i = 1; i <= 20; i++) {
  const x = Math.round(i * nsWidth / 10);
  grid += `<path d="M${x} 0V2000"/>`;
}
for (let t = 1; t <= 210; t++) {
  const x = Math.round(t * nsWidth / 100);
  ruler += `<path d="M${x} ${t % 10 ? 4 : 0}V10"/>`;
}
for (let i = 0; i <= 10; i++) {
  const label = i === 0 ? '0 ns' : i === 10 ? '1 ns' : `0.${i} ns`;
  ruler += `<text x="${Math.round(i * nsWidth / 5)}" y="29">${label}</text>`;
}
document.getElementById('plot').innerHTML = grid;
document.getElementById('ruler').innerHTML = ruler;
```

FILE: styles.css
```css
* {
  box-sizing: border-box;
}

body {
  margin: 0;
  height: 100vh;
  overflow: hidden;
  background: linear-gradient(#444 84px, #b2b2b2 84px);
  font-family: "DejaVu Sans Condensed", "DejaVu Sans", sans-serif;
  font-size: 16px;
  color: #1a1a1a;
}

.sprite {
  position: absolute;
  width: 0;
  height: 0;
}

button {
  padding: 0;
  border: 0;
  background: none;
  font: inherit;
  color: inherit;
}

i {
  font-style: normal;
}

svg {
  display: block;
  flex: none;
}

/* window runs past the right edge of the screen */
.app {
  width: calc(100% + 33px);
  height: 100%;
  margin-left: 4px;
  display: flex;
  flex-direction: column;
  background: #cbcbcb;
  border-top-left-radius: 8px;
  overflow: hidden;
}

/* title and menu */
.titlebar {
  height: 43px;
  padding: 0 0 2px 12px;
  display: flex;
  align-items: center;
  gap: 6px;
  background: linear-gradient(90deg, #e6f7ef, #e9f7ec 45%, #ecf7e4 65%, #e4f7ef 95%);
}

.logo {
  width: 24px;
  height: 22px;
}

h1 {
  flex: 1;
  margin: 0;
  font: 17px "Open Sans", sans-serif;
  color: #000;
}

.window-buttons {
  display: flex;
  gap: 54px;
  padding-right: 25px;
}

.window-buttons svg {
  width: 16px;
  height: 16px;
  fill: none;
  stroke: #000;
}

.menubar {
  height: 29px;
  padding-bottom: 2px;
  display: flex;
  align-items: center;
  background: #fff;
}

.menubar button {
  padding: 0 12px 0 11px;
  font: 18px "Open Sans", sans-serif;
}

/* toolbars */
.toolbars {
  background: #efefef;
  border-top: 1px solid #b0b0b0;
  border-bottom: 1px solid #999;
}

.toolbar-row {
  display: flex;
  gap: 2px;
}

.toolbar {
  height: 49px;
  padding: 0 11px 3px 5px;
  display: flex;
  align-items: center;
  gap: 9px;
  border: 1px solid #808080;
  border-left-color: #fff;
  box-shadow: inset 0 1px #fff;
}

.toolbar-row:last-child .toolbar {
  padding: 0 10px 2px 5px;
}

.toolbar::before {
  content: "";
  width: 3px;
  height: 41px;
  margin: 3px 4px 0 0;
  border: 1px solid #808080;
  border-width: 0 1px 1px 0;
  background: #fff;
}

.icons {
  display: flex;
  align-items: center;
  gap: 9px;
}

.icons.tight {
  gap: 2px;
}

.tool svg {
  width: 24px;
  height: 24px;
}

.raised,
.pressed {
  width: 30px;
  height: 29px;
  display: grid;
  place-items: center;
  border: 1px solid #fff;
}

.raised {
  border-right: 2px solid #888;
  border-bottom: 2px solid #888;
}

.pressed {
  border-top: 2px solid #333;
  border-left: 2px solid #333;
  background: #fff;
}

.sep {
  width: 2px;
  height: 24px;
  margin: 0 3px 0 2px;
  background: repeating-linear-gradient(#555 0 2px, transparent 2px 4px);
}

.menu-arrow {
  margin: 6px -3px 0 -2px;
}

.caret {
  display: block;
  border: 5px solid transparent;
  border-top-color: #111;
  border-bottom-width: 0;
}

.runtime {
  display: flex;
  gap: 2px;
  margin-right: 3px;
}

.runtime input,
.search input,
select {
  height: 28px;
  border: 2px solid #fff;
  border-top-color: #555;
  border-left-color: #555;
  border-radius: 0;
  padding: 0 1px;
  font: 17px "Liberation Mono", monospace;
  color: #111;
}

.runtime input {
  width: 90px;
  text-align: right;
  background: #fff;
}

.spin {
  width: 19px;
  display: flex;
  flex-direction: column;
}

.spin button,
.drop {
  display: grid;
  place-items: center;
  border: 1px solid #fff;
  border-right: 2px solid #888;
  border-bottom: 2px solid #888;
}

.spin button {
  flex: 1;
}

.spin button::before,
.drop::before {
  content: "";
  border: solid transparent;
}

.spin .more::before {
  border-width: 0 5px 8px;
  border-bottom-color: #000;
}

.spin .less::before {
  border-width: 8px 5px 0;
  border-top-color: #000;
}

.combo {
  display: flex;
  align-items: center;
  gap: 8px;
}

.combo > span {
  padding-bottom: 3px;
}

.disabled,
.disabled select {
  color: #888;
}

select {
  --arrow: #111;
  appearance: none;
  padding-left: 3px;
  opacity: 1;
  background:
    conic-gradient(from -28deg at 50% 100%, var(--arrow) 56deg, transparent 0) right 4px center / 18px 12px no-repeat,
    linear-gradient(#888, #888) right 0 top 0 / 2px 100% no-repeat,
    linear-gradient(#888, #888) right 0 bottom 0 / 24px 2px no-repeat,
    linear-gradient(#fff, #fff) right 24px top 0 / 2px 100% no-repeat,
    #efefef;
}

select:disabled {
  --arrow: #777;
}

.layout-select {
  width: 213px;
}

.column-select {
  width: 351px;
}

.search {
  display: flex;
  align-items: center;
  gap: 6px;
}

.search label {
  padding: 0 2px 4px 2px;
}

.search input {
  width: 173px;
}

.drop {
  width: 25px;
  height: 27px;
}

.drop::before {
  border-width: 10px 9px 0;
  border-top-color: #000;
}

/* docking area */
.workspace {
  flex: 1;
  min-height: 0;
  padding: 2px 0 10px;
  display: flex;
  gap: 11px;
}

.dock {
  display: flex;
  flex-direction: column;
}

.dock-left {
  width: 422px;
  padding-left: 1px;
}

.dock-center {
  width: 461px;
  gap: 11px;
  padding-bottom: 1px;
}

.pane {
  flex: 1;
  min-height: 0;
  display: flex;
  flex-direction: column;
  border: 1px solid #999;
  box-shadow: 1px 1px #fff, inset 1px 1px #fff;
  background: #efefef;
}

.pane-title {
  height: 28px;
  padding: 0 3px 1px 2px;
  display: flex;
  align-items: center;
  gap: 5px;
}

.pane-title > svg {
  width: 24px;
  height: 24px;
}

h2 {
  margin: 0 3px 0 0;
  font: inherit;
  white-space: nowrap;
}

.pane-title button {
  width: 16px;
  height: 17px;
  margin-left: 1px;
  border-right: 1px solid #888;
  border-bottom: 1px solid #888;
}

.pane-title button svg {
  width: 15px;
  height: 15px;
}

.grip {
  flex: 1;
  display: flex;
  align-items: center;
  gap: 3px;
}

.lines {
  flex: 1;
  height: 10px;
  border: solid #7c7c7c;
  border-width: 2px 0;
  box-shadow: inset 0 1px #fff, inset 0 -1px #fff;
}

.lines:last-child {
  border-image: linear-gradient(#7c7c7c 3px, transparent 3px 7px, #7c7c7c 7px) 2;
  border-right: 1px solid #7c7c7c;
}

.dots {
  width: 28px;
  height: 13px;
  background:
    radial-gradient(circle at 1px 1px, #222 1px, transparent 1px) 0 0 / 5px 10px,
    radial-gradient(circle at 1px 1px, #222 1px, transparent 1px) 2px 5px / 5px 10px;
}

.pane-title.selected {
  margin: 0 1px 2px;
  padding-left: 4px;
  background: #9ab2d1;
}

.selected .lines {
  border-color: #222;
  border-image: none;
  box-shadow: 0 -3px #d5f0fa, inset 0 3px #d5f0fa;
}

.pane-body {
  flex: 1;
  min-height: 0;
  padding: 0 1px;
  display: grid;
  grid-template: minmax(0, 1fr) 25px / minmax(0, 1fr) 22px;
  gap: 3px 6px;
}

.table-wrap {
  overflow: hidden;
  border-left: 1px solid #888;
  border-right: 1px solid #fff;
  border-bottom: 1px solid #fff;
}

.white {
  background: #fff;
}

.navy {
  background: #515b8b;
  color: #f2f2f2;
}

.sky {
  background: #8ba3ff;
}

table {
  width: 100%;
  table-layout: fixed;
  border-collapse: separate;
  border-spacing: 0;
}

.c-instance { width: 220px; }
.c-unit { width: 106px; }
.c-name { width: 220px; }
.c-value { width: 66px; }
.c-kind { width: 57px; }
.c-mode { width: 66px; }
.c-type { width: 156px; }

th {
  height: 27px;
  padding: 2px 2px 0;
  overflow: hidden;
  border: solid #777;
  border-width: 1px 1px 2px 0;
  box-shadow: inset 1px 1px #fff;
  background: #efefef;
  font-weight: normal;
  text-align: left;
  white-space: nowrap;
  color: #1a1a1a;
}

th:first-child {
  padding: 0;
}

.sort {
  display: inline-block;
  width: 15px;
  height: 24px;
  margin-right: 2px;
  vertical-align: middle;
  border-right: 1px solid #777;
  background: conic-gradient(from -26deg at 50% 100%, #444 52deg, transparent 0) 1px 7px / 11px 11px no-repeat;
}

tbody::before {
  content: "";
  display: block;
  height: 3px;
}

td {
  height: 25px;
  padding: 0 0 2px;
  overflow: hidden;
  white-space: nowrap;
}

tr:nth-child(even) td {
  height: 26px;
}

.selected td {
  background: #bfccd9;
  color: #1a1a1a;
}

.navy .selected td:last-child {
  background: none;
}

.navy td:nth-child(2) {
  padding-left: 1px;
}

.node {
  height: 23px;
  display: flex;
  align-items: center;
}

.node svg {
  width: 18px;
  height: 18px;
  margin-right: 12px;
}

.toggle {
  width: 16px;
  height: 16px;
  flex: none;
  border: 1px solid #98a4b4;
  border-radius: 2px;
  background: linear-gradient(135deg, #fff 40%, #ccd5e0);
  font-size: 15px;
  font-weight: bold;
  line-height: 13px;
  color: #000;
}

.root .toggle {
  margin: 0 9px 0 5px;
}

.root svg {
  margin-right: 9px;
}

.child td:first-child {
  background: linear-gradient(#888, #888) 39px 0 / 1px 100% no-repeat;
}

.child .toggle {
  margin-left: 31px;
}

.stub {
  width: 6px;
  height: 1px;
  margin-right: 4px;
  background: #888;
}

.process .branch {
  width: 15px;
  height: 1px;
  margin-left: 40px;
  background: #888;
}

.process svg {
  width: 20px;
  height: 20px;
  margin-right: 7px;
}

.navy .toggle,
.navy .no-toggle {
  width: 16px;
  margin: 0 7px 0 5px;
}

.navy .node svg {
  width: 22px;
  height: 22px;
  margin-right: 7px;
}

/* scroll bars */
.scroll {
  display: flex;
  background: #f7f7f7;
}

.scroll.vertical {
  flex-direction: column;
}

.scroll button,
.thumb {
  background: #efefef;
  border: 1px solid #fff;
  border-right: 2px solid #7c7c7c;
  border-bottom: 2px solid #7c7c7c;
}

.scroll button {
  width: 24px;
  display: grid;
  place-items: center;
}

.vertical button {
  width: auto;
  height: 25px;
}

.before { flex: var(--before) 0 0; }
.thumb { flex: var(--thumb) 0 0; }
.after { flex: var(--after) 0 0; }

.scroll button::before {
  content: "";
  border: 6px solid transparent;
  border-width: 5px 6px;
}

.scroll .left::before { border-right-color: #000; border-left-width: 0; }
.scroll .right::before { border-left-color: #000; border-right-width: 0; }
.scroll .up::before { border-width: 5px; border-bottom-color: #000; border-top-width: 0; }
.scroll .down::before { border-width: 5px; border-top-color: #000; border-bottom-width: 0; }
.scroll.off .left::before { border-right-color: #999; }
.scroll.off .right::before { border-left-color: #999; }

/* tabs under the left dock */
.tabs {
  height: 36px;
  padding-top: 2px;
  display: flex;
  align-items: flex-start;
}

.tab {
  height: 32px;
  padding: 0 4px 3px 6px;
  display: flex;
  align-items: center;
  gap: 5px;
  border: 2px solid #222;
  border-top: 0;
  border-radius: 0 0 5px 5px;
  background: #cbcbcb;
}

.tab.active {
  background: #efefef;
}

.tab svg {
  width: 24px;
  height: 24px;
}

.tab b {
  margin-left: 5px;
  font-size: 15px;
  color: #b5b5b5;
}

.tab-fill {
  flex: 1;
  height: 34px;
  border-top: 2px solid #222;
  background: #efefef;
}

.tab-nav {
  width: 15px;
  height: 23px;
  margin-left: 1px;
  border-right: 2px solid #888;
  border-bottom: 2px solid #888;
  background: #efefef;
}

/* wave window */
.wave {
  margin-bottom: 2px;
}

.wave-grid {
  flex: 1;
  min-height: 0;
  margin: 0 5px 5px;
  display: grid;
  grid-template: 30px minmax(0, 1fr) 60px 28px / 239px 150px minmax(0, 1fr);
  gap: 4px;
  background: #fafafa;
}

.wave-head,
.names,
.values,
.time-names,
.time-values {
  background: #808080;
  color: #f2f2f2;
}

.wave-head {
  display: flex;
  align-items: center;
}

.names-head {
  padding-left: 14px;
  gap: 6px;
}

.names-head svg {
  width: 24px;
  height: 24px;
}

.msgs {
  justify-content: flex-end;
  padding-right: 8px;
}

.plot-head,
.plot {
  background: #000;
  border-left: 2px solid #e8c020;
}

.names {
  border-left: 13px solid #fff;
}

.names,
.values {
  padding-top: 3px;
}

.signal {
  height: 25px;
  padding: 0 0 1px 2px;
  display: flex;
  align-items: center;
}

.signal.active {
  background: #fff;
  color: #1a1a1a;
}

.names .signal {
  padding-left: 8px;
}

.names .signal svg {
  width: 22px;
  height: 22px;
  margin: 0 8px 0 6px;
}

.no-toggle {
  width: 16px;
}

.end-line {
  margin: 1px 6px 0 3px;
  height: 2px;
  background: #111;
}

.plot {
  overflow: hidden;
}

.plot svg {
  width: 100%;
  height: 100%;
  stroke: #6e6e6e;
  stroke-width: 2;
}

.now,
.cursor {
  display: flex;
  justify-content: space-between;
  align-items: center;
}

.now {
  height: 33px;
}

.cursor {
  height: 27px;
}

.now > span,
.cursor > span {
  padding-right: 14px;
}

.now {
  background: #fff;
  color: #1a1a1a;
}

.time-values > div {
  justify-content: flex-end;
}

.now .mini,
.cursor .mini {
  height: 100%;
  padding: 0 0 0 13px;
  display: flex;
  align-items: center;
  background: #808080;
}

.mini svg {
  width: 18px;
  height: 18px;
}

.cursor .mini {
  padding-left: 16px;
}

.ruler {
  background: #000;
  overflow: hidden;
}

.ruler svg {
  width: 100%;
  height: 33px;
  border-bottom: 1px solid #777;
  border-left: 1px solid #e8c020;
  stroke: #0d0;
  stroke-width: 2;
}

.ruler text {
  fill: #0e0;
  stroke: none;
  text-anchor: middle;
}

.cursor-time span {
  display: inline-block;
  margin: 1px;
  padding: 0 3px;
  border: 2px solid #e0b010;
  line-height: 20px;
  color: #e6c619;
}

.scroll-cell {
  border-top: 2px solid #888;
}

.scroll-cell.first {
  padding-left: 13px;
  background: #808080;
}

.scroll-cell.last {
  margin-right: 30px;
}

.scroll-cell .scroll {
  height: 100%;
}

/* transcript */
.transcript {
  height: 37px;
  background: #efefef;
  border: 1px solid #999;
}

.transcript .pane-title {
  height: 27px;
  padding: 3px 3px 0 2px;
}

.transcript-text {
  height: 12px;
  margin-left: 5px;
  background: #fff;
  border: solid #222;
  border-width: 2px 0 0 2px;
}

/* review marks drawn over the window */
.mark {
  position: absolute;
  border: 3px solid #ff4b4b;
}

.mark-runtime {
  left: 902px;
  top: 63px;
  width: 156px;
  height: 74px;
}

.mark-signals {
  left: 900px;
  top: 214px;
  width: 450px;
  height: 134px;
}
```
